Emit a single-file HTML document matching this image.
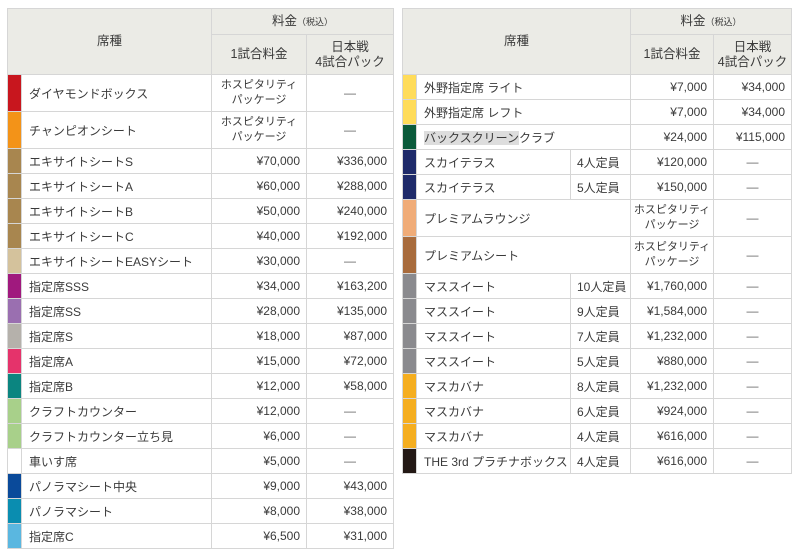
<!DOCTYPE html>
<html><head><meta charset="utf-8"><style>
body{margin:0;background:#fff;font-family:"Liberation Sans","Noto Sans CJK JP",sans-serif;color:#3a3a3a;font-size:12px;}
table{position:absolute;top:8px;border-collapse:collapse;table-layout:fixed;}
td,th{border:1px solid #d6d6d6;padding:0;font-weight:normal;white-space:nowrap;}
th{background:#ebebe6;text-align:center;line-height:15px;font-size:12.5px;}
td.n{padding-left:7px;text-align:left;}
td.p{text-align:right;padding-right:6px;}
td.c{text-align:center;color:#666;}
td.h{text-align:center;font-size:11px;line-height:15px;}
td.s{padding-left:6px;}
small{font-size:9px;}
tr.r{height:25px;}
tr.t{height:37px;}
.hl{background:#ddd;}
</style></head><body>
<table style="left:7px;width:386px">
<colgroup><col style="width:14px"><col style="width:190px"><col style="width:95px"><col style="width:87px"></colgroup>
<tr style="height:26px"><th colspan="2" rowspan="2">席種</th><th colspan="2">料金<small>（税込）</small></th></tr>
<tr style="height:40px"><th>1試合料金</th><th>日本戦<br>4試合パック</th></tr>
<tr class="t"><td style="background:#c8161e"></td><td class="n">ダイヤモンドボックス</td><td class="h">ホスピタリティ<br>パッケージ</td><td class="c">—</td></tr>
<tr class="t"><td style="background:#f39318"></td><td class="n">チャンピオンシート</td><td class="h">ホスピタリティ<br>パッケージ</td><td class="c">—</td></tr>
<tr class="r"><td style="background:#a8864f"></td><td class="n">エキサイトシートS</td><td class="p">¥70,000</td><td class="p">¥336,000</td></tr>
<tr class="r"><td style="background:#a8864f"></td><td class="n">エキサイトシートA</td><td class="p">¥60,000</td><td class="p">¥288,000</td></tr>
<tr class="r"><td style="background:#a8864f"></td><td class="n">エキサイトシートB</td><td class="p">¥50,000</td><td class="p">¥240,000</td></tr>
<tr class="r"><td style="background:#a8864f"></td><td class="n">エキサイトシートC</td><td class="p">¥40,000</td><td class="p">¥192,000</td></tr>
<tr class="r"><td style="background:#d4c29c"></td><td class="n">エキサイトシートEASYシート</td><td class="p">¥30,000</td><td class="c">—</td></tr>
<tr class="r"><td style="background:#a0197e"></td><td class="n">指定席SSS</td><td class="p">¥34,000</td><td class="p">¥163,200</td></tr>
<tr class="r"><td style="background:#9a6fb0"></td><td class="n">指定席SS</td><td class="p">¥28,000</td><td class="p">¥135,000</td></tr>
<tr class="r"><td style="background:#b5b1ab"></td><td class="n">指定席S</td><td class="p">¥18,000</td><td class="p">¥87,000</td></tr>
<tr class="r"><td style="background:#e5336b"></td><td class="n">指定席A</td><td class="p">¥15,000</td><td class="p">¥72,000</td></tr>
<tr class="r"><td style="background:#0b8580"></td><td class="n">指定席B</td><td class="p">¥12,000</td><td class="p">¥58,000</td></tr>
<tr class="r"><td style="background:#a8d08a"></td><td class="n">クラフトカウンター</td><td class="p">¥12,000</td><td class="c">—</td></tr>
<tr class="r"><td style="background:#a8d08a"></td><td class="n">クラフトカウンター立ち見</td><td class="p">¥6,000</td><td class="c">—</td></tr>
<tr class="r"><td style="background:#fff"></td><td class="n">車いす席</td><td class="p">¥5,000</td><td class="c">—</td></tr>
<tr class="r"><td style="background:#0a4a9a"></td><td class="n">パノラマシート中央</td><td class="p">¥9,000</td><td class="p">¥43,000</td></tr>
<tr class="r"><td style="background:#0a8db0"></td><td class="n">パノラマシート</td><td class="p">¥8,000</td><td class="p">¥38,000</td></tr>
<tr class="r"><td style="background:#5ab7e0"></td><td class="n">指定席C</td><td class="p">¥6,500</td><td class="p">¥31,000</td></tr>
</table>
<table style="left:402px;width:389px">
<colgroup><col style="width:14px"><col style="width:154px"><col style="width:60px"><col style="width:83px"><col style="width:78px"></colgroup>
<tr style="height:26px"><th colspan="3" rowspan="2">席種</th><th colspan="2">料金<small>（税込）</small></th></tr>
<tr style="height:40px"><th>1試合料金</th><th>日本戦<br>4試合パック</th></tr>
<tr class="r"><td style="background:#ffdc5a"></td><td class="n" colspan="2">外野指定席 ライト</td><td class="p">¥7,000</td><td class="p">¥34,000</td></tr>
<tr class="r"><td style="background:#ffdc5a"></td><td class="n" colspan="2">外野指定席 レフト</td><td class="p">¥7,000</td><td class="p">¥34,000</td></tr>
<tr class="r"><td style="background:#0a5a3a"></td><td class="n" colspan="2"><span class="hl">バックスクリーン</span>クラブ</td><td class="p">¥24,000</td><td class="p">¥115,000</td></tr>
<tr class="r"><td style="background:#1e2a6a"></td><td class="n">スカイテラス</td><td class="s">4人定員</td><td class="p">¥120,000</td><td class="c">—</td></tr>
<tr class="r"><td style="background:#1e2a6a"></td><td class="n">スカイテラス</td><td class="s">5人定員</td><td class="p">¥150,000</td><td class="c">—</td></tr>
<tr class="t"><td style="background:#f0ac78"></td><td class="n" colspan="2">プレミアムラウンジ</td><td class="h">ホスピタリティ<br>パッケージ</td><td class="c">—</td></tr>
<tr class="t"><td style="background:#a86b3c"></td><td class="n" colspan="2">プレミアムシート</td><td class="h">ホスピタリティ<br>パッケージ</td><td class="c">—</td></tr>
<tr class="r"><td style="background:#8a8a8e"></td><td class="n">マススイート</td><td class="s">10人定員</td><td class="p">¥1,760,000</td><td class="c">—</td></tr>
<tr class="r"><td style="background:#8a8a8e"></td><td class="n">マススイート</td><td class="s">9人定員</td><td class="p">¥1,584,000</td><td class="c">—</td></tr>
<tr class="r"><td style="background:#8a8a8e"></td><td class="n">マススイート</td><td class="s">7人定員</td><td class="p">¥1,232,000</td><td class="c">—</td></tr>
<tr class="r"><td style="background:#8a8a8e"></td><td class="n">マススイート</td><td class="s">5人定員</td><td class="p">¥880,000</td><td class="c">—</td></tr>
<tr class="r"><td style="background:#f5ae1f"></td><td class="n">マスカバナ</td><td class="s">8人定員</td><td class="p">¥1,232,000</td><td class="c">—</td></tr>
<tr class="r"><td style="background:#f5ae1f"></td><td class="n">マスカバナ</td><td class="s">6人定員</td><td class="p">¥924,000</td><td class="c">—</td></tr>
<tr class="r"><td style="background:#f5ae1f"></td><td class="n">マスカバナ</td><td class="s">4人定員</td><td class="p">¥616,000</td><td class="c">—</td></tr>
<tr class="r"><td style="background:#231815"></td><td class="n">THE 3rd プラチナボックス</td><td class="s">4人定員</td><td class="p">¥616,000</td><td class="c">—</td></tr>
</table>
</body></html>
